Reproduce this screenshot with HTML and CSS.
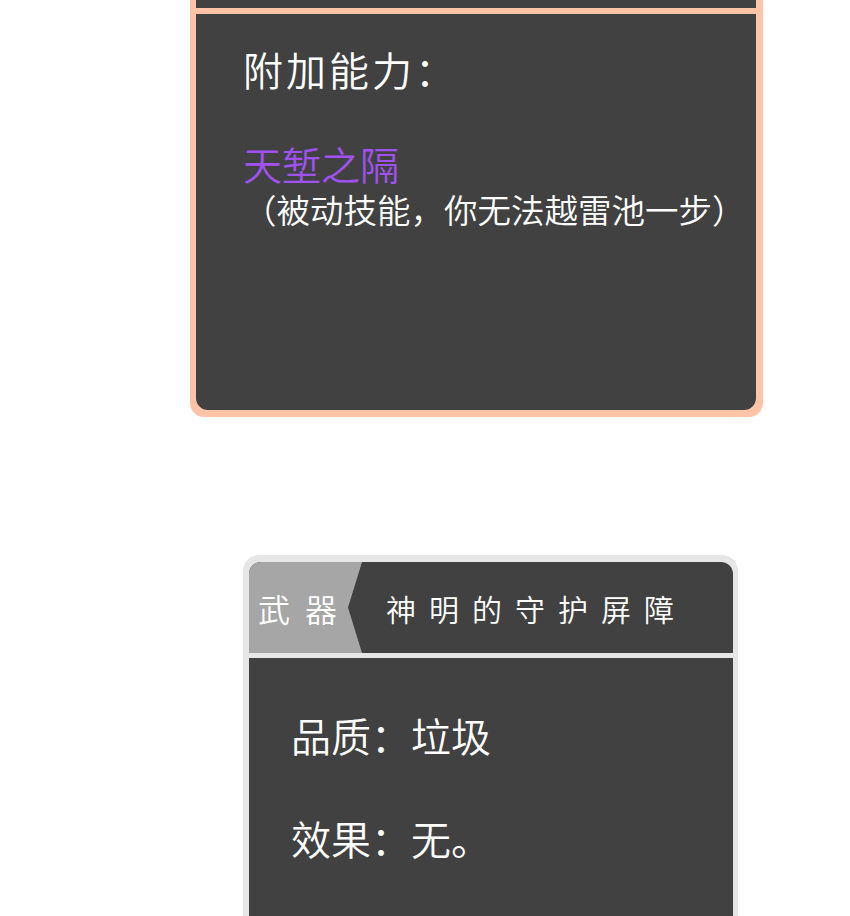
FILE: index.html
```html
<!DOCTYPE html>
<html lang="zh-CN">
<head>
    <meta charset="UTF-8">
    <meta name="viewport" content="width=device-width, initial-scale=1.0">
    <title>角色面板</title>
    <link rel="stylesheet" href="styles.css">
</head>
<body>
    <div class="skill-card">
        <div class="skill-head"></div>
        <div class="skill-body">
            <h2 class="skill-title">附加能力：</h2>
            <div class="skill-name">天堑之隔</div>
            <div class="skill-desc">（被动技能，你无法越雷池一步）</div>
        </div>
    </div>

    <div class="item-card">
        <div class="item-head">
            <div class="item-tab">武器</div>
            <div class="item-name">神明的守护屏障</div>
        </div>
        <div class="item-body">
            <p class="item-line">品质：垃圾</p>
            <p class="item-line">效果：无。</p>
        </div>
    </div>
</body>
</html>
```

FILE: styles.css
```css
body {
    margin: 0;
    background: #ffffff;
    font-family: "Noto Sans CJK SC", "Noto Sans", sans-serif;
    font-weight: 350;
    color: #ffffff;
}

/* 技能卡片 */
.skill-card {
    width: 573px;
    margin-left: 190px;
    background: #ffc4a8;
    padding: 0 7px 7px 6px;
    box-sizing: border-box;
    border-radius: 0 0 14px 14px;
}
.skill-head {
    height: 8px;
    background: #414141;
}
.skill-body {
    margin-top: 6px;
    height: 396px;
    background: #414141;
    border-radius: 0 0 12px 12px;
    padding: 31px 0 0 47px;
    box-sizing: border-box;
}
.skill-title {
    margin: 0;
    font-size: 40px;
    font-weight: 350;
    letter-spacing: 3px;
    line-height: 48px;
}
.skill-name {
    margin-top: 48px;
    font-size: 39px;
    line-height: 44px;
    color: #a052f0;
}
.skill-desc {
    margin-top: 4px;
    font-size: 33.5px;
    line-height: 40px;
}

/* 装备卡片 */
.item-card {
    width: 495px;
    margin: 138px 0 0 243px;
    background: #e6e6e6;
    padding: 7px 5px 0 6px;
    box-sizing: border-box;
    border-radius: 16px 16px 0 0;
}
.item-head {
    display: flex;
    align-items: center;
    height: 91px;
    background: #414141;
    border-radius: 12px 12px 0 0;
    overflow: hidden;
}
.item-tab {
    width: 113px;
    height: 100%;
    display: flex;
    align-items: center;
    padding-left: 9px;
    box-sizing: border-box;
    background: #a6a6a6;
    clip-path: polygon(0 0, 100% 0, calc(100% - 14px) 50%, 100% 100%, 0 100%);
    font-size: 32px;
    letter-spacing: 15px;
}
.item-name {
    padding-left: 24px;
    font-size: 30px;
    letter-spacing: 13px;
}
.item-body {
    margin-top: 5px;
    height: 300px;
    background: #414141;
    padding: 53px 0 0 42px;
    box-sizing: border-box;
}
.item-line {
    margin: 0 0 55px;
    font-size: 40px;
    line-height: 48px;
}
```
